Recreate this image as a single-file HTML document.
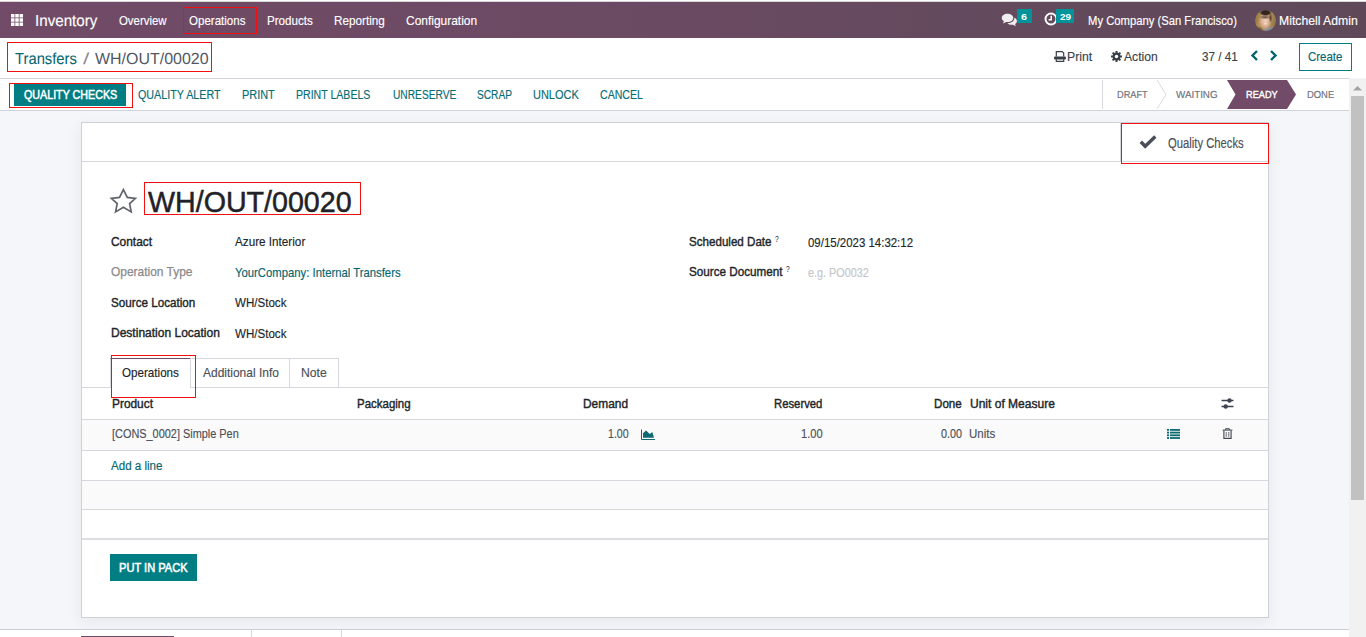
<!DOCTYPE html>
<html><head><meta charset="utf-8">
<title>Inventory - WH/OUT/00020</title>
<style>
*{margin:0;padding:0;box-sizing:border-box}
html,body{width:1366px;height:637px;overflow:hidden;background:#f5f6fa;font-family:"Liberation Sans",sans-serif;color:#212529}
.a{position:absolute}
.t{position:absolute;white-space:nowrap;line-height:normal;transform-origin:0 0}
.rb{position:absolute;border:1px solid #f01010}
.hl{position:absolute;height:1px;background:#d6d8de}
.vl{position:absolute;width:1px;background:#d6d8de}
</style></head><body>
<!-- top strip + navbar -->
<div class="a" style="left:0;top:0;width:1366px;height:1px;background:#fff"></div><div class="a" style="left:0;top:1px;width:1366px;height:1px;background:#d6d8d6"></div>
<div class="a" style="left:0;top:2px;width:1366px;height:36px;background:linear-gradient(to right,#714b67 0%,#6c4a64 40%,#634a5d 75%,#5f4959 100%)"></div>
<svg class="a" style="left:11px;top:14px" width="12" height="12" viewBox="0 0 12 12" fill="#fff">
  <rect x="0" y="0" width="3.5" height="3.5"/><rect x="4.25" y="0" width="3.5" height="3.5"/><rect x="8.5" y="0" width="3.5" height="3.5"/>
  <rect x="0" y="4.25" width="3.5" height="3.5"/><rect x="4.25" y="4.25" width="3.5" height="3.5"/><rect x="8.5" y="4.25" width="3.5" height="3.5"/>
  <rect x="0" y="8.5" width="3.5" height="3.5"/><rect x="4.25" y="8.5" width="3.5" height="3.5"/><rect x="8.5" y="8.5" width="3.5" height="3.5"/>
</svg>
<!-- systray icons -->
<svg class="a" style="left:1001px;top:13px" width="17" height="14" viewBox="0 0 17 14">
  <path d="M6.5 0.8C3.2 0.8 0.8 2.7 0.8 5c0 1.3.8 2.4 2 3.2L2.2 10.6l3-1.6c.4.1.9.1 1.3.1 3.3 0 5.7-1.9 5.7-4.2S9.8.8 6.5.8z" fill="#f0eef0"/>
  <path d="M13.3 4.5c.1.2.1.4.1.6 0 2.9-2.9 5.1-6.5 5.1l-.6 0c1.2 1 2.8 1.6 4.5 1.6.4 0 .8 0 1.2-.1l2.7 1.5-.6-2.2c1.1-.7 1.8-1.8 1.8-3 0-1.4-.9-2.6-2.6-3.5z" fill="#f0eef0"/>
</svg>
<div class="a" style="left:1017px;top:9px;width:15px;height:14px;background:#00939a"></div>
<svg class="a" style="left:1044px;top:12px" width="14" height="14" viewBox="0 0 14 14">
  <circle cx="7" cy="7" r="5.5" fill="none" stroke="#fff" stroke-width="2"/>
  <path d="M7.2 3.8V7.7H4.6" fill="none" stroke="#fff" stroke-width="1.5"/>
</svg>
<div class="a" style="left:1056px;top:9px;width:18px;height:14px;background:#00939a"></div>
<div class="a" style="left:1255px;top:10px;width:21px;height:21px;border-radius:50%;background:
radial-gradient(ellipse 2.2px 1.2px at 10.5px 13.8px,#f6e6dc 0%,rgba(246,230,220,0) 100%),
radial-gradient(ellipse 6px 2.2px at 10px 7.2px,rgba(60,45,40,.8) 0%,rgba(60,45,40,0) 100%),
radial-gradient(ellipse 6.5px 3.5px at 10.5px 2.6px,#33261e 0%,#33261e 55%,rgba(51,38,30,0) 100%),
radial-gradient(ellipse 1.8px 5px at 15.5px 8px,rgba(60,44,34,.9) 0%,rgba(60,44,34,0) 100%),
radial-gradient(ellipse 6.5px 9px at 10.3px 11px,#f0d2c0 0%,#dcae92 60%,rgba(190,140,110,0) 100%),
radial-gradient(ellipse 8px 5px at 15px 21px,#85909a 0%,#85909a 50%,rgba(133,144,154,0) 100%),
radial-gradient(ellipse 6px 4px at 3px 20px,#3e3228 0%,rgba(62,50,40,0) 100%),
linear-gradient(100deg,#8a6a3a 0%,#b6975a 30%,#a98a52 70%,#8c7045 100%)"></div>
<div class="rb" style="left:183px;top:7px;width:74px;height:27px"></div>

<!-- control panel -->
<div class="a" style="left:0;top:38px;width:1366px;height:40px;background:#fff"></div>
<div class="rb" style="left:7px;top:42px;width:205px;height:30px"></div>
<svg class="a" style="left:1054px;top:51px" width="12" height="11" viewBox="0 0 12 11">
  <path d="M2.3 5.6V0.6H8.2L9.7 2.1V5.6" fill="none" stroke="#3b3f47" stroke-width="1.2"/>
  <rect x="0" y="5.4" width="12" height="3" rx="1" fill="#3b3f47"/>
  <path d="M2.3 8.2V10.4H9.7V8.2" fill="none" stroke="#3b3f47" stroke-width="1.2"/>
</svg>
<svg class="a" style="left:1111px;top:51.3px" width="11" height="11" viewBox="0 0 12 12">
  <g fill="#3b3f47"><circle cx="6" cy="6" r="4.3"/>
  <rect x="4.9" y="0" width="2.2" height="12"/><rect x="0" y="4.9" width="12" height="2.2"/>
  <rect x="4.9" y="0" width="2.2" height="12" transform="rotate(45 6 6)"/><rect x="4.9" y="0" width="2.2" height="12" transform="rotate(-45 6 6)"/></g>
  <circle cx="6" cy="6" r="1.9" fill="#fff"/>
</svg>
<svg class="a" style="left:1250px;top:50px" width="9" height="11" viewBox="0 0 9 11">
  <path d="M7 1L2.5 5.5 7 10" fill="none" stroke="#01666b" stroke-width="2.4"/>
</svg>
<svg class="a" style="left:1269px;top:50px" width="9" height="11" viewBox="0 0 9 11">
  <path d="M2 1l4.5 4.5L2 10" fill="none" stroke="#01666b" stroke-width="2.4"/>
</svg>
<div class="a" style="left:1299px;top:43px;width:53px;height:28px;border:1px solid #017e84"></div>

<!-- status bar row -->
<div class="hl" style="left:0;top:78px;width:1349px;background:#d0d3d9"></div>
<div class="a" style="left:0;top:79px;width:1349px;height:31px;background:#fff"></div>
<div class="hl" style="left:0;top:110px;width:1349px;background:#d0d3d9"></div>
<div class="a" style="left:14px;top:84px;width:112px;height:22px;background:#017e84"></div>
<div class="rb" style="left:9px;top:83px;width:124px;height:25px"></div>
<div class="vl" style="left:1102px;top:80px;height:29px;background:#d6d8de"></div>
<svg class="a" style="left:1156px;top:80px" width="11" height="29" viewBox="0 0 11 29">
  <path d="M1 0l9 14.5L1 29" fill="none" stroke="#d8dadd" stroke-width="1"/>
</svg>
<svg class="a" style="left:1227px;top:80px" width="70" height="29" viewBox="0 0 70 29">
  <path d="M0 0H60L69 14.5 60 29H0L8.5 14.5z" fill="#714b67"/>
</svg>

<!-- scrollbar -->
<div class="a" style="left:1349px;top:79px;width:17px;height:558px;background:#f1f1f1"></div>
<svg class="a" style="left:1352px;top:84px" width="11" height="8" viewBox="0 0 11 8"><path d="M1 6.5L5.5 2 10 6.5z" fill="#a3a3a3"/></svg>
<div class="a" style="left:1351px;top:96px;width:13px;height:404px;background:#c1c1c1"></div>

<!-- sheet -->
<div class="a" style="left:81px;top:122px;width:1188px;height:496px;background:#fff;border:1px solid #cfd1d8;box-shadow:0 4px 14px rgba(60,60,80,.08)"></div>
<div class="hl" style="left:82px;top:161px;width:1186px;background:#d6d8de"></div>
<div class="vl" style="left:1120px;top:123px;height:38px;background:#d6d8de"></div>
<div class="rb" style="left:1121px;top:123px;width:148px;height:41px"></div>
<svg class="a" style="left:1139px;top:135px" width="18" height="14" viewBox="0 0 18 14">
  <path d="M1.8 6.8L6.2 11.3 16.3 1.6" fill="none" stroke="#4a4e58" stroke-width="3.4"/>
</svg>
<svg class="a" style="left:108px;top:186px" width="30" height="29" viewBox="0 0 30 29">
  <path d="M15.4 3.6L19.3 11.4 27.4 12.3 21.6 17.6 23.2 25.9 15.4 21.3 7.6 25.9 9.2 17.6 3.4 12.3 11.5 11.4z" fill="none" stroke="#60646c" stroke-width="1.7" stroke-linejoin="miter"/>
</svg>
<div class="rb" style="left:144px;top:182px;width:217px;height:33px"></div>

<!-- tabs -->
<div class="hl" style="left:82px;top:387px;width:28px;background:#d6d8de"></div>
<div class="hl" style="left:190px;top:387px;width:1078px;background:#d6d8de"></div>
<div class="a" style="left:110px;top:358px;width:81px;height:30px;border:1px solid #d6d8de;border-top-color:#714b67;border-bottom:none;background:#fff"></div>
<div class="a" style="left:190px;top:358px;width:100px;height:29px;border:1px solid #d6d8de;border-left:none;border-bottom:none"></div>
<div class="a" style="left:289px;top:358px;width:50px;height:29px;border:1px solid #d6d8de;border-left:none;border-bottom:none"></div>
<div class="rb" style="left:111px;top:355px;width:85px;height:43px"></div>

<!-- table -->
<div class="hl" style="left:82px;top:419px;width:1186px;background:#d6d8de"></div>
<div class="a" style="left:82px;top:420px;width:1186px;height:30px;background:#fafafb"></div>
<div class="hl" style="left:82px;top:450px;width:1186px;background:#d6d8de"></div>
<div class="hl" style="left:82px;top:480px;width:1186px;background:#d6d8de"></div>
<div class="a" style="left:82px;top:481px;width:1186px;height:28px;background:#fafafb"></div>
<div class="hl" style="left:82px;top:509px;width:1186px;background:#d6d8de"></div>
<div class="a" style="left:82px;top:538px;width:1186px;height:2px;background:#dcdde0"></div>
<svg class="a" style="left:640px;top:429px" width="16" height="12" viewBox="0 0 16 12">
  <path d="M1.5 0.5V10.5H15" fill="none" stroke="#0e6a70" stroke-width="1"/>
  <path d="M3 8.7V4.2L6 1.4 9.8 5 12.3 3.1 14 8.7z" fill="#0e6a70"/>
</svg>
<svg class="a" style="left:1221px;top:398px" width="13" height="11" viewBox="0 0 13 11">
  <path d="M0.5 2.5H12.5M0.5 8.5H12.5" stroke="#3e4450" stroke-width="1.3"/>
  <circle cx="8.5" cy="2.5" r="2.2" fill="#3e4450"/><circle cx="4.7" cy="8.5" r="2.2" fill="#3e4450"/>
</svg>
<svg class="a" style="left:1167px;top:429px" width="13" height="10" viewBox="0 0 13 10">
  <g fill="#0e6a70"><rect x="0" y="0" width="2" height="1.8"/><rect x="0" y="2.7" width="2" height="1.8"/><rect x="0" y="5.4" width="2" height="1.8"/><rect x="0" y="8.1" width="2" height="1.8"/>
  <rect x="3" y="0" width="10" height="1.8"/><rect x="3" y="2.7" width="10" height="1.8"/><rect x="3" y="5.4" width="10" height="1.8"/><rect x="3" y="8.1" width="10" height="1.8"/></g>
</svg>
<svg class="a" style="left:1222px;top:428px" width="11" height="11" viewBox="0 0 11 11">
  <path d="M0.6 2.1H10.4M3.7 2.1V0.7H7.3V2.1" fill="none" stroke="#3e4450" stroke-width="1"/>
  <path d="M1.9 2.4V10.4H9.1V2.4" fill="none" stroke="#3e4450" stroke-width="1.1"/>
  <path d="M4.2 4V8.8M6.8 4V8.8" stroke="#3e4450" stroke-width="0.8"/>
</svg>
<div class="a" style="left:110px;top:554px;width:87px;height:27px;background:#017e84"></div>

<!-- below sheet: chatter top -->
<div class="hl" style="left:0;top:629px;width:1349px;background:#cbced5"></div>
<div class="a" style="left:0;top:630px;width:1349px;height:7px;background:#fff"></div>
<div class="a" style="left:81px;top:636px;width:93px;height:1px;background:#714b67"></div>
<div class="vl" style="left:251px;top:630px;height:7px"></div>
<div class="vl" style="left:341px;top:630px;height:7px"></div>

<span class="t" style="left:34.50px;top:13px;font-size:16px;color:#ffffff;-webkit-text-stroke:0.15px #ffffff;transform:scaleX(0.9468);text-rendering:geometricPrecision;">Inventory</span>
<span class="t" style="left:119.00px;top:13px;font-size:13px;color:#ffffff;-webkit-text-stroke:0.15px #ffffff;transform:scaleX(0.8774);">Overview</span>
<span class="t" style="left:188.60px;top:13px;font-size:13px;color:#ffffff;-webkit-text-stroke:0.15px #ffffff;transform:scaleX(0.8868);">Operations</span>
<span class="t" style="left:266.60px;top:13px;font-size:13px;color:#ffffff;-webkit-text-stroke:0.15px #ffffff;transform:scaleX(0.8928);">Products</span>
<span class="t" style="left:333.60px;top:13px;font-size:13px;color:#ffffff;-webkit-text-stroke:0.15px #ffffff;transform:scaleX(0.9015);">Reporting</span>
<span class="t" style="left:406.40px;top:13px;font-size:13px;color:#ffffff;-webkit-text-stroke:0.15px #ffffff;transform:scaleX(0.9192);">Configuration</span>
<span class="t" style="left:1021.00px;top:11px;font-size:9.6px;color:#ffffff;font-weight:bold;transform:scaleX(1.1215);">6</span>
<span class="t" style="left:1059.90px;top:11px;font-size:9.6px;color:#ffffff;font-weight:bold;transform:scaleX(1.0374);">29</span>
<span class="t" style="left:1088.30px;top:13px;font-size:13px;color:#ffffff;-webkit-text-stroke:0.15px #ffffff;transform:scaleX(0.8659);">My Company (San Francisco)</span>
<span class="t" style="left:1278.80px;top:13px;font-size:13px;color:#ffffff;-webkit-text-stroke:0.15px #ffffff;transform:scaleX(0.9391);">Mitchell Admin</span>
<span class="t" style="left:14.90px;top:51px;font-size:16px;color:#05666f;-webkit-text-stroke:0.05px #05666f;transform:scaleX(0.9239);text-rendering:geometricPrecision;">Transfers</span>
<span class="t" style="left:82.60px;top:51px;font-size:16px;color:#8f8897;transform:scaleX(1.4157);text-rendering:geometricPrecision;">/</span>
<span class="t" style="left:95.10px;top:51px;font-size:16px;color:#525866;transform:scaleX(0.9974);text-rendering:geometricPrecision;">WH/OUT/00020</span>
<span class="t" style="left:1067.30px;top:49px;font-size:13px;color:#3b3f47;-webkit-text-stroke:0.15px #3b3f47;transform:scaleX(0.9421);">Print</span>
<span class="t" style="left:1124.00px;top:49px;font-size:13px;color:#3b3f47;-webkit-text-stroke:0.15px #3b3f47;transform:scaleX(0.9322);">Action</span>
<span class="t" style="left:1201.80px;top:49px;font-size:13px;color:#3b3f47;-webkit-text-stroke:0.15px #3b3f47;transform:scaleX(0.9006);">37 / 41</span>
<span class="t" style="left:1308.00px;top:49px;font-size:13px;color:#05666f;-webkit-text-stroke:0.15px #05666f;transform:scaleX(0.8821);">Create</span>
<span class="t" style="left:23.80px;top:88px;font-size:12px;color:#ffffff;-webkit-text-stroke:0.5px #ffffff;transform:scaleX(0.8919);">QUALITY CHECKS</span>
<span class="t" style="left:137.90px;top:88px;font-size:12px;color:#046d76;-webkit-text-stroke:0.15px #046d76;transform:scaleX(0.8954);">QUALITY ALERT</span>
<span class="t" style="left:241.90px;top:88px;font-size:12px;color:#046d76;-webkit-text-stroke:0.15px #046d76;transform:scaleX(0.9111);">PRINT</span>
<span class="t" style="left:296.40px;top:88px;font-size:12px;color:#046d76;-webkit-text-stroke:0.15px #046d76;transform:scaleX(0.8805);">PRINT LABELS</span>
<span class="t" style="left:392.50px;top:88px;font-size:12px;color:#046d76;-webkit-text-stroke:0.15px #046d76;transform:scaleX(0.8502);">UNRESERVE</span>
<span class="t" style="left:476.90px;top:88px;font-size:12px;color:#046d76;-webkit-text-stroke:0.15px #046d76;transform:scaleX(0.8464);">SCRAP</span>
<span class="t" style="left:533.00px;top:88px;font-size:12px;color:#046d76;-webkit-text-stroke:0.15px #046d76;transform:scaleX(0.9140);">UNLOCK</span>
<span class="t" style="left:600.00px;top:88px;font-size:12px;color:#046d76;-webkit-text-stroke:0.15px #046d76;transform:scaleX(0.8830);">CANCEL</span>
<span class="t" style="left:1116.90px;top:90px;font-size:10.2px;color:#6c7079;-webkit-text-stroke:0.15px #6c7079;transform:scaleX(0.9029);text-rendering:geometricPrecision;">DRAFT</span>
<span class="t" style="left:1176.30px;top:90px;font-size:10.2px;color:#6c7079;-webkit-text-stroke:0.15px #6c7079;transform:scaleX(0.9618);text-rendering:geometricPrecision;">WAITING</span>
<span class="t" style="left:1246.30px;top:90px;font-size:10.2px;color:#ffffff;-webkit-text-stroke:0.4px #ffffff;transform:scaleX(0.9018);text-rendering:geometricPrecision;">READY</span>
<span class="t" style="left:1306.80px;top:90px;font-size:10.2px;color:#6c7079;-webkit-text-stroke:0.15px #6c7079;transform:scaleX(0.9236);text-rendering:geometricPrecision;">DONE</span>
<span class="t" style="left:1168.00px;top:135px;font-size:14px;color:#4c4f57;-webkit-text-stroke:0.15px #4c4f57;transform:scaleX(0.8040);">Quality Checks</span>
<span class="t" style="left:148.30px;top:186px;font-size:29px;color:#1f2228;transform:scaleX(0.9869);-webkit-text-stroke:0.5px #1f2228;">WH/OUT/00020</span>
<span class="t" style="left:110.60px;top:234px;font-size:13px;color:#212529;-webkit-text-stroke:0.4px #212529;transform:scaleX(0.9152);">Contact</span>
<span class="t" style="left:234.70px;top:234px;font-size:13px;color:#212529;-webkit-text-stroke:0.15px #212529;transform:scaleX(0.9007);">Azure Interior</span>
<span class="t" style="left:110.60px;top:264px;font-size:13px;color:#8a8a8a;-webkit-text-stroke:0.25px #8a8a8a;transform:scaleX(0.9193);">Operation Type</span>
<span class="t" style="left:234.70px;top:265px;font-size:13px;color:#05666f;-webkit-text-stroke:0.15px #05666f;transform:scaleX(0.8702);">YourCompany: Internal Transfers</span>
<span class="t" style="left:110.60px;top:295px;font-size:13px;color:#212529;-webkit-text-stroke:0.4px #212529;transform:scaleX(0.8973);">Source Location</span>
<span class="t" style="left:234.70px;top:295px;font-size:13px;color:#212529;-webkit-text-stroke:0.15px #212529;transform:scaleX(0.8902);">WH/Stock</span>
<span class="t" style="left:110.60px;top:325px;font-size:13px;color:#212529;-webkit-text-stroke:0.4px #212529;transform:scaleX(0.9244);">Destination Location</span>
<span class="t" style="left:234.70px;top:326px;font-size:13px;color:#212529;-webkit-text-stroke:0.15px #212529;transform:scaleX(0.8902);">WH/Stock</span>
<span class="t" style="left:689.20px;top:234px;font-size:13px;color:#212529;-webkit-text-stroke:0.4px #212529;transform:scaleX(0.8919);">Scheduled Date</span>
<span class="t" style="left:775.30px;top:234px;font-size:9px;color:#212529;transform:scaleX(0.7400);">?</span>
<span class="t" style="left:807.60px;top:235px;font-size:13px;color:#212529;-webkit-text-stroke:0.15px #212529;transform:scaleX(0.8805);">09/15/2023 14:32:12</span>
<span class="t" style="left:689.20px;top:264px;font-size:13px;color:#212529;-webkit-text-stroke:0.4px #212529;transform:scaleX(0.8986);">Source Document</span>
<span class="t" style="left:785.60px;top:264px;font-size:9px;color:#212529;transform:scaleX(0.7400);">?</span>
<span class="t" style="left:807.60px;top:265px;font-size:13px;color:#c4c6cb;-webkit-text-stroke:0.15px #c4c6cb;transform:scaleX(0.8342);">e.g. PO0032</span>
<span class="t" style="left:122.30px;top:365px;font-size:13px;color:#212529;-webkit-text-stroke:0.15px #212529;transform:scaleX(0.8947);">Operations</span>
<span class="t" style="left:202.50px;top:365px;font-size:13px;color:#4c4f57;-webkit-text-stroke:0.15px #4c4f57;transform:scaleX(0.9211);">Additional Info</span>
<span class="t" style="left:301.10px;top:365px;font-size:13px;color:#4c4f57;-webkit-text-stroke:0.15px #4c4f57;transform:scaleX(0.9399);">Note</span>
<span class="t" style="left:112.00px;top:397px;font-size:12.5px;color:#212529;-webkit-text-stroke:0.4px #212529;transform:scaleX(0.9513);">Product</span>
<span class="t" style="left:356.90px;top:397px;font-size:12.5px;color:#212529;-webkit-text-stroke:0.4px #212529;transform:scaleX(0.9186);">Packaging</span>
<span class="t" style="left:583.00px;top:397px;font-size:12.5px;color:#212529;-webkit-text-stroke:0.4px #212529;transform:scaleX(0.9524);">Demand</span>
<span class="t" style="left:774.00px;top:397px;font-size:12.5px;color:#212529;-webkit-text-stroke:0.4px #212529;transform:scaleX(0.9047);">Reserved</span>
<span class="t" style="left:934.00px;top:397px;font-size:12.5px;color:#212529;-webkit-text-stroke:0.4px #212529;transform:scaleX(0.9298);">Done</span>
<span class="t" style="left:969.60px;top:397px;font-size:12.5px;color:#212529;-webkit-text-stroke:0.4px #212529;transform:scaleX(0.9620);">Unit of Measure</span>
<span class="t" style="left:111.80px;top:427px;font-size:12.5px;color:#4c4f57;-webkit-text-stroke:0.15px #4c4f57;transform:scaleX(0.8726);">[CONS_0002] Simple Pen</span>
<span class="t" style="left:607.80px;top:427px;font-size:12.5px;color:#4c4f57;-webkit-text-stroke:0.15px #4c4f57;transform:scaleX(0.8501);">1.00</span>
<span class="t" style="left:801.40px;top:427px;font-size:12.5px;color:#4c4f57;-webkit-text-stroke:0.15px #4c4f57;transform:scaleX(0.8871);">1.00</span>
<span class="t" style="left:940.90px;top:427px;font-size:12.5px;color:#4c4f57;-webkit-text-stroke:0.15px #4c4f57;transform:scaleX(0.8665);">0.00</span>
<span class="t" style="left:968.80px;top:427px;font-size:12.5px;color:#4c4f57;-webkit-text-stroke:0.15px #4c4f57;transform:scaleX(0.9193);">Units</span>
<span class="t" style="left:111.40px;top:459px;font-size:12.5px;color:#05666f;-webkit-text-stroke:0.15px #05666f;transform:scaleX(0.9263);">Add a line</span>
<span class="t" style="left:119.30px;top:561px;font-size:12px;color:#ffffff;-webkit-text-stroke:0.5px #ffffff;transform:scaleX(0.9253);">PUT IN PACK</span>
</body></html>
